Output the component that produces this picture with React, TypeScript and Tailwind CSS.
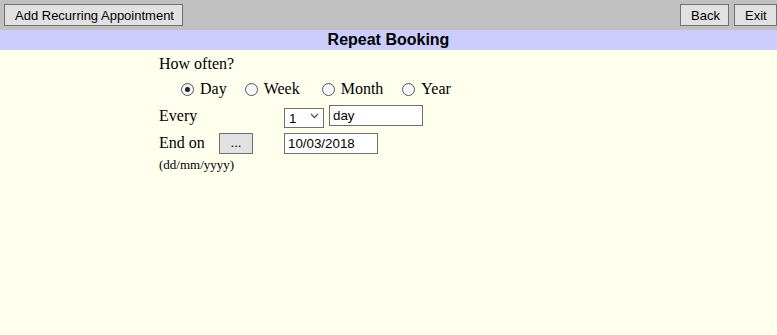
import { useState } from 'react';

const OPTIONS = [
  { label: 'Day', gap: '' },
  { label: 'Week', gap: 'ml-[18px]' },
  { label: 'Month', gap: 'ml-[22px]' },
  { label: 'Year', gap: 'ml-[19px]' },
];

function Radio({ checked }: { checked: boolean }) {
  return (
    <span className="w-[13px] h-[13px] rounded-full border border-[#555] bg-[linear-gradient(#f0f0f0,#ffffff)] flex items-center justify-center shrink-0">
      {checked && <span className="w-[5px] h-[5px] rounded-full bg-[#222]"></span>}
    </span>
  );
}

export default function App() {
  const [often, setOften] = useState('Day');
  const [every, setEvery] = useState('1');
  const [endOn, setEndOn] = useState('10/03/2018');

  const btn =
    'h-[22px] px-[10px] bg-[#e1e1e1] border border-[#707070] text-[13px] text-black leading-none whitespace-nowrap font-["Liberation_Sans",Arial,sans-serif]';

  return (
    <div className="w-[777px] h-[335px] bg-[#ffffee] font-['Liberation_Serif','Times_New_Roman',serif] text-[16px] text-black">
      {/* top toolbar */}
      <div className="h-[30px] bg-[#c0c0c0] flex justify-between items-start pt-[4px] pl-[4px] pr-[0px]">
        <button className={btn + ' w-[179px] px-0'}>Add Recurring Appointment</button>
        <div className="flex gap-[5px]">
          <button className={btn + ' w-[49px] px-0'}>Back</button>
          <button className={btn + ' w-[43px] px-0'}>Exit</button>
        </div>
      </div>

      <div className="h-[20px] bg-[#ccccff] text-center font-bold leading-[20px] font-['Liberation_Sans',Arial,sans-serif]">
        Repeat Booking
      </div>

      <div className="pl-[159px] pt-[5px]">
        <div className="leading-[18px]">How often?</div>

        <div className="flex items-center h-[18px] mt-[7px] pl-[22px]">
          {OPTIONS.map((o) => (
            <label
              key={o.label}
              className={'flex items-center cursor-default ' + o.gap}
              onClick={() => setOften(o.label)}
            >
              <Radio checked={often === o.label} />
              <span className="ml-[6px] leading-[18px]">{o.label}</span>
            </label>
          ))}
        </div>

        <div className="flex items-center mt-[7px] h-[21px]">
          <div className="w-[125px] leading-[18px]">Every</div>
          <div className="relative w-[40px] h-[20px]">
            <select
              value={every}
              onChange={(e) => setEvery(e.target.value)}
              className="appearance-none w-full h-full border border-[#707070] bg-white pl-[4px] text-[13.33px] leading-none font-['Liberation_Sans',Arial,sans-serif] outline-none"
            >
              {[1, 2, 3, 4, 5, 6, 7, 8, 9, 10].map((n) => (
                <option key={n} value={n}>{n}</option>
              ))}
            </select>
            <svg className="absolute right-[5px] top-[7px] pointer-events-none" width="9" height="6" viewBox="0 0 9 6">
              <path d="M1 1 L4.5 4.5 L8 1" fill="none" stroke="#555" strokeWidth="1.3" />
            </svg>
          </div>
          <input
            readOnly
            value="day"
            className="ml-[5px] w-[94px] h-[21px] border border-[#707070] bg-white px-[3px] text-[13.33px] font-['Liberation_Sans',Arial,sans-serif] outline-none"
          />
        </div>

        <div className="flex items-center mt-[6px] h-[22px]">
          <div className="w-[60px] leading-[18px]">End on</div>
          <button className="w-[34px] h-[21px] bg-[#e1e1e1] border border-[#707070] text-[13.33px] leading-none font-['Liberation_Sans',Arial,sans-serif]">
            ...
          </button>
          <input
            value={endOn}
            onChange={(e) => setEndOn(e.target.value)}
            className="ml-[31px] w-[94px] h-[21px] border border-[#707070] bg-white px-[3px] text-[13.33px] font-['Liberation_Sans',Arial,sans-serif] outline-none"
          />
        </div>

        <div className="text-[13px] leading-[15px] mt-[3px]">(dd/mm/yyyy)</div>
      </div>
    </div>
  );
}
